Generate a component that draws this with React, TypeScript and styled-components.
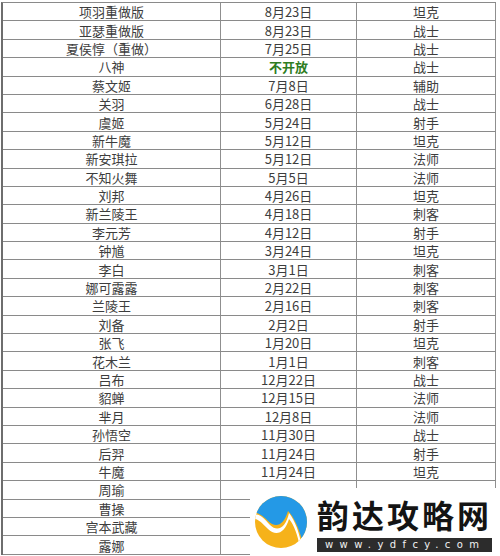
import React from 'react';
import styled, { createGlobalStyle } from 'styled-components';

const GlobalStyle = createGlobalStyle`
  html, body {
    margin: 0;
    padding: 0;
    background: #fff;
  }
  body {
    font-family: "Noto Sans CJK SC", "Noto Sans", sans-serif;
  }
`;

interface Hero {
  name: string;
  date?: string;
  role?: string;
  closed?: boolean;
}

// last rows sit under the site watermark, only the names show
const heroes: Hero[] = [
  { name: '项羽重做版', date: '8月23日', role: '坦克' },
  { name: '亚瑟重做版', date: '8月23日', role: '战士' },
  { name: '夏侯惇（重做）', date: '7月25日', role: '战士' },
  { name: '八神', date: '不开放', role: '战士', closed: true },
  { name: '蔡文姬', date: '7月8日', role: '辅助' },
  { name: '关羽', date: '6月28日', role: '战士' },
  { name: '虞姬', date: '5月24日', role: '射手' },
  { name: '新牛魔', date: '5月12日', role: '坦克' },
  { name: '新安琪拉', date: '5月12日', role: '法师' },
  { name: '不知火舞', date: '5月5日', role: '法师' },
  { name: '刘邦', date: '4月26日', role: '坦克' },
  { name: '新兰陵王', date: '4月18日', role: '刺客' },
  { name: '李元芳', date: '4月12日', role: '射手' },
  { name: '钟馗', date: '3月24日', role: '坦克' },
  { name: '李白', date: '3月1日', role: '刺客' },
  { name: '娜可露露', date: '2月22日', role: '刺客' },
  { name: '兰陵王', date: '2月16日', role: '刺客' },
  { name: '刘备', date: '2月2日', role: '射手' },
  { name: '张飞', date: '1月20日', role: '坦克' },
  { name: '花木兰', date: '1月1日', role: '刺客' },
  { name: '吕布', date: '12月22日', role: '战士' },
  { name: '貂蝉', date: '12月15日', role: '法师' },
  { name: '芈月', date: '12月8日', role: '法师' },
  { name: '孙悟空', date: '11月30日', role: '战士' },
  { name: '后羿', date: '11月24日', role: '射手' },
  { name: '牛魔', date: '11月24日', role: '坦克' },
  { name: '周瑜' },
  { name: '曹操' },
  { name: '宫本武藏' },
  { name: '露娜' }
];

const Page = styled.div`
  position: relative;
  width: 500px;
  height: 556px;
  overflow: hidden;
  background: #fff;
  padding-top: 2px;
  box-sizing: border-box;
`;

const Table = styled.div`
  margin-left: 1px;
  width: 495px;
  border-top: 1px solid #8a8a8a;
  border-left: 2px solid #6e6e6e;
  box-sizing: border-box;
`;

const Row = styled.div`
  display: grid;
  grid-template-columns: 218px 136px 139px;
  height: 18.4px;
  box-sizing: border-box;
  border-bottom: 1px solid #8a8a8a;
`;

const Cell = styled.div<{ $closed?: boolean }>`
  display: flex;
  align-items: center;
  justify-content: center;
  border-right: 1px solid #8f8f8f;
  font-size: 13px;
  line-height: 1;
  color: ${({ $closed }) => ($closed ? '#2f7d22' : '#3d3d3d')};
  font-weight: ${({ $closed }) => ($closed ? 700 : 400)};
  white-space: nowrap;
`;

const Watermark = styled.div`
  position: absolute;
  left: 250px;
  top: 488px;
  right: 0;
  bottom: 0;
  background: #fff;
  display: flex;
  align-items: center;
  gap: 9px;
  padding-left: 4px;
`;

const Brand = styled.div`
  display: flex;
  flex-direction: column;
  align-items: stretch;
  gap: 6px;
  padding-top: 4px;
`;

const BrandName = styled.div`
  font-family: "Noto Sans CJK SC", sans-serif;
  font-weight: 700;
  font-size: 32px;
  line-height: 36px;
  letter-spacing: 3px;
  color: #141414;
`;

const BrandUrl = styled.div`
  background: #2c2c2c;
  color: #f2f2f2;
  font-family: "DejaVu Sans", sans-serif;
  font-size: 10px;
  line-height: 14px;
  height: 14px;
  letter-spacing: 6.4px;
  padding-left: 8px;
  white-space: nowrap;
`;

function Logo (): React.ReactElement {
  return (
    <svg width='54' height='54' viewBox='0 0 54 54'>
      <defs>
        <clipPath id='lc'>
          <circle cx='27' cy='27' r='26' />
        </clipPath>
      </defs>
      <g clipPath='url(#lc)'>
        <rect x='0' y='0' width='54' height='54' fill='#f6b21a' />
        <path d='M0 0 H54 V54 H50 C46 34 40 22 34 16 C30 30 22 34 14 26 C8 20 3 17 0 18 Z' fill='#2499e6' />
        <path d='M0 20 C6 18 10 24 16 30 C24 38 32 32 35 18 C41 26 46 38 48 54 H46 C44 40 40 30 35 24 C31 38 22 42 14 34 C8 28 4 24 0 24 Z' fill='#fff' />
      </g>
    </svg>
  );
}

export default function App (): React.ReactElement {
  return (
    <>
      <GlobalStyle />
      <Page>
        <Table>
          {heroes.map((h) => (
            <Row key={h.name}>
              <Cell>{h.name}</Cell>
              <Cell $closed={h.closed}>{h.date}</Cell>
              <Cell>{h.role}</Cell>
            </Row>
          ))}
        </Table>
        <Watermark>
          <Logo />
          <Brand>
            <BrandName>韵达攻略网</BrandName>
            <BrandUrl>www.ydfcy.com</BrandUrl>
          </Brand>
        </Watermark>
      </Page>
    </>
  );
}
